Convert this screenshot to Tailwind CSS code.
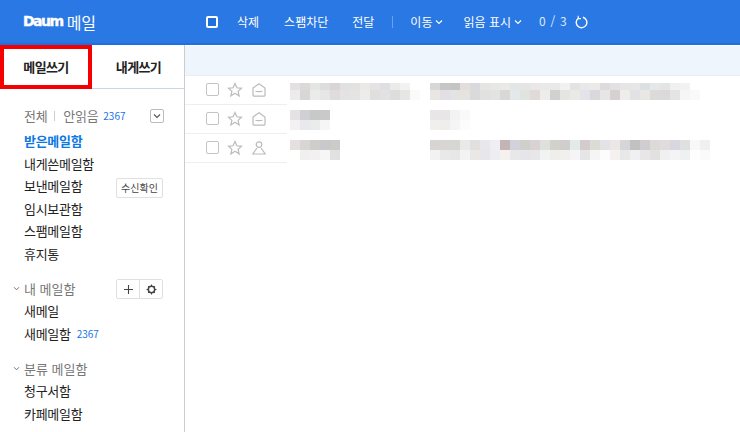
<!DOCTYPE html>
<html lang="ko">
<head>
<meta charset="UTF-8" />
<title>Daum 메일</title>
<script src="https://cdn.jsdelivr.net/npm/@tailwindcss/browser@4"></script>
</head>
<body class="w-[740px] h-[432px] overflow-hidden bg-white text-[#222] text-[13px] font-['Noto_Sans_CJK_KR','Noto_Sans',sans-serif]">

<!-- Top bar -->
<header class="h-[45px] bg-[#2a78e4] border-b-2 border-[#1f6fdc] flex items-center text-white">
  <div class="w-[185px] pl-[23px] flex items-center gap-[4px]">
    <span class="font-['DejaVu_Sans'] font-bold text-[14px] tracking-[-1.5px] [-webkit-text-stroke:0.4px_white]">Daum</span>
    <span class="text-[16px] leading-none">메일</span>
  </div>
  <div class="flex items-center text-[12px] ml-[21px]">
    <span class="w-[12px] h-[12px] border-2 border-white rounded-[2px] bg-[#1f6fdc]"></span>
    <span class="ml-[19px]">삭제</span>
    <span class="ml-[25px]">스팸차단</span>
    <span class="ml-[24px]">전달</span>
    <span class="ml-[18px] w-px h-[12px] bg-white/30"></span>
    <span class="ml-[17px]">이동</span>
    <svg class="ml-[3px]" width="8" height="6" viewBox="0 0 8 6" fill="none" stroke="white" stroke-width="1.1"><path d="M1 1.500l3 3 3-3"/></svg>
    <span class="ml-[20px]">읽음 표시</span>
    <svg class="ml-[3px]" width="8" height="6" viewBox="0 0 8 6" fill="none" stroke="white" stroke-width="1.1"><path d="M1 1.500l3 3 3-3"/></svg>
    <span class="ml-[17px] text-[#dbe9fc] tracking-[0.7px] -translate-y-px">0 / 3</span>
    <svg class="ml-[8px]" width="13" height="14" viewBox="0 0 13 14" fill="none" stroke="white" stroke-width="1.4"><path d="M3.600 3a5.300 5.300 0 1 0 4.300-.7"/><path d="M3.200 0.800v2.800h2.800" stroke-width="1.100"/></svg>
  </div>
</header>

<div class="flex h-[387px]">
  <!-- Sidebar -->
  <aside class="w-[185px] shrink-0 border-r border-[#ccc]">
    <div class="relative h-[44px] flex border-b border-[#c9d5e5] text-[13px] font-bold tracking-[-0.6px]">
      <div class="w-[92px] flex items-center justify-center">메일쓰기</div>
      <div class="flex-1 pl-[1px] flex items-center justify-center">내게쓰기</div>
      <div class="absolute left-0 top-0 w-[92px] h-[44px] border-4 border-[#f50000]"></div>
    </div>

    <div class="pl-[24px] pr-[21px] pt-[15px] tracking-[-0.3px]">
      <div class="flex items-center h-[23px] mb-[3px] text-[#777]">
        <span>전체</span>
        <span class="ml-[7px] mr-[8px] w-px h-[10px] bg-[#ccc]"></span>
        <span>안읽음</span>
        <span class="ml-[5px] text-[10px] tracking-normal text-[#1a73e8]">2367</span>
        <span class="ml-auto -mr-px w-[14px] h-[14px] border border-[#bbb] rounded-[2px] flex items-center justify-center">
          <svg width="8" height="6" viewBox="0 0 8 6" fill="none" stroke="#555" stroke-width="1.1"><path d="M1 1.500l3 3 3-3"/></svg>
        </span>
      </div>
      <ul class="leading-[22.600px]">
        <li class="h-[22.600px] font-bold text-[#0b78e3]">받은메일함</li>
        <li class="h-[22.600px]">내게쓴메일함</li>
        <li class="h-[22.600px] flex items-center justify-between">보낸메일함
          <span class="mt-[3px] w-[47px] h-[20px] border border-[#e0e0e0] rounded-[2px] text-[10px] leading-[18px] tracking-normal text-center text-[#444]">수신확인</span>
        </li>
        <li class="h-[22.600px]">임시보관함</li>
        <li class="h-[22.600px]">스팸메일함</li>
        <li class="h-[22.600px]">휴지통</li>
      </ul>

      <div class="relative mt-[11.400px] flex items-center h-[23px] text-[#777]">
        <svg class="absolute left-[-11px] top-[9px]" width="7" height="5" viewBox="0 0 8 6" fill="none" stroke="#555" stroke-width="1"><path d="M1 1.500l3 3 3-3"/></svg>
        <span class="tracking-normal">내 메일함</span>
        <span class="ml-auto mt-[2px] flex w-[47px] h-[20px] border border-[#e0e0e0] rounded-[2px]">
          <span class="flex-1 flex items-center justify-center border-r border-[#e0e0e0]">
            <svg width="11" height="11" viewBox="0 0 11 11" stroke="#444" stroke-width="1.1"><path d="M5.500 1v9M1 5.500h9"/></svg>
          </span>
          <span class="flex-1 flex items-center justify-center">
            <svg width="11" height="11" viewBox="0 0 11 11" fill="none" stroke="#444" stroke-width="1.500"><circle cx="5.500" cy="5.500" r="3.200"/><path stroke-width="1" d="M5.500 0.500v1.500M5.500 9v1.500M0.500 5.500H2M9 5.500h1.500M2 2l1 1M8 8l1 1M9 2L8 3M3 8l-1 1"/></svg>
          </span>
        </span>
      </div>
      <ul class="leading-[22.600px]">
        <li class="h-[22.600px]">새메일</li>
        <li class="h-[22.600px] flex items-center">새메일함<span class="ml-[6px] text-[10px] tracking-normal text-[#1a73e8]">2367</span></li>
      </ul>

      <div class="relative mt-[11.800px] flex items-center h-[23px] text-[#777]">
        <svg class="absolute left-[-11px] top-[9px]" width="7" height="5" viewBox="0 0 8 6" fill="none" stroke="#555" stroke-width="1"><path d="M1 1.500l3 3 3-3"/></svg>
        <span class="tracking-normal">분류 메일함</span>
      </div>
      <ul class="leading-[22.600px]">
        <li class="h-[22.600px]">청구서함</li>
        <li class="h-[22.600px]">카페메일함</li>
      </ul>
    </div>
  </aside>

  <!-- Mail list -->
  <main class="flex-1">
    <div class="h-[30px] mt-px bg-[#eff5fd] border-b border-[#e8edf3]"></div>
    <div id="rows"></div>
  </main>
</div>

<script>
  const star = '<svg width="16" height="16" viewBox="0 0 16 16" fill="none" stroke="#bbb" stroke-width="1.2"><path d="M8 1.500l1.900 4.300 4.600.5-3.400 3.100 1 4.600L8 11.200l-4.100 2.800 1-4.600L1.500 6.300l4.600-.5z"/></svg>';
  const open = '<svg width="14" height="14" viewBox="0 0 14 14" fill="none" stroke="#bbb" stroke-width="1.200"><path d="M1 5L7 .8 13 5v7a1.200 1.200 0 0 1-1.200 1.200H2.200A1.200 1.200 0 0 1 1 12z"/><path d="M3.500 8.200c1 .5 6 .5 7 0"/></svg>';
  const person = '<svg width="14" height="14" viewBox="0 0 14 14" fill="none" stroke="#bbb" stroke-width="1.200"><circle cx="7" cy="3.600" r="2.800"/><path d="M5 7L.8 13h12.400L9 7"/></svg>';

  // pixelated (mosaic) sender and subject cells, two bands per row
  const rows = [
    { icon: open, offset: 7, top: 7, s: ['e3e1e1 dcdad9 e5e5e3 dedddd d9d5d5 e2e1e2 e2e2e2 ebe9e8 e4e4e6 dfdfe1 ebebe9 f2f2f2', 'ececec d9d7d6 eaebeb e7e6e6 e0dcdc e4e2e2 e4e4e4 edeceb e1dfdc e2e2e5 dddddd e7e6e4 fafaf8'],
      m: ['d8d7d7 c6c5c7 c4c4c2 e3dedb d9d9de e6e5e4 e7e7e5 e9e9e9 e3e6e6 e5e5e5 ebe7e7 e9e9e9 e9e9e9 f1f1ef e3e3e4 e9e8e8 ece9e9 dddbdb e2e1e3 e7e6e7 e7e7e9 dde0e0 e6e7ea e2e5e2 f1f0f0 f3f2f2', 'e9e6e3 e0e0e5 e3e2e4 e8e2de dbdadb e2e1e2 e1e4e0 d9d8d6 e3e8e8 e0e4df e0dbd8 ededeb d3d0d0 e5e6e4 e9e9e6 e2e4e9 d8d8dd e7e5e6 d6d0d0 efecea e2e2e5 e8e7e6 dbdbd8 dcd9db e3e5e4 f7f6f6 f9f9f8'] },
    { icon: open, offset: 5, top: 10, s: ['e4e2e2 d0cfd3 c9c8c8 c9c9c9', 'f3f1f2 e9e8ea eaecec f7f6f6'], m: ['e8e6e6 e8e6e7 f3f3f3 f9f9f9', 'efefed f0eeed f5f5f5 fcfcfc'] },
    { icon: person, offset: 6, top: 10, s: ['e3e0df d9d5d5 cfcdcc c9c9cb cdcac8', 'ffffff f2eff0 f2f0f0 f6f6f6 e2e1e1'],
      m: ['d7d5d4 d7d6d2 d5d7d3 e8eaea e2e0de e8e8ec efeff3 c3b5b3 d2d2da cfcfcb d8d2d2 dee0de d3d1cb d0cecb e4e9e9 d4cccc dcdcd4 e3e2e6 ece6e6 d5d6da c2c1c1 d1cccf dadad6 e0dcdc d8d6de dde2e0 f8f8f8 f0f0f0', 'f2f2f2 e9e9e9 e7e7e7 f3f3f3 e9e8e6 e7e6ea eeeef2 f5f1ef e8e7ea e6e6ea e7e7ea f1f2f2 eeeeeb f1f0ef f5f5f7 e6e6e6 f5f5f5 fcfcfc f5f1f1 e8e8e8 f0f0f2 e9e6e8 e3e0e1 f0f0f0 f4f3f5 eff1f0 fdfdfd fafafa'] },
  ];
  const band = (cells, h) => '<div class="flex">' + cells.split(' ').map(c => `<i class="block w-[10px]" style="height:${h}px;background:#${c}"></i>`).join('') + '</div>';
  const mosaic = (r, k) => band(r[k][0], r.top) + band(r[k][1], 10);
  document.getElementById('rows').innerHTML = rows.map(r => `
    <div class="h-[29px] w-[555px] pb-[2px] flex items-center relative">
      <div class="absolute left-0 bottom-0 w-[102px] h-px bg-[#eee]"></div>
      <span class="ml-[21px] w-[13px] h-[13px] border-[1.500px] border-[#c4c4c4] rounded-[2px]"></span>
      <span class="ml-[8px] flex">${star}</span>
      <span class="ml-[9px] flex">${r.icon}</span>
      <div class="absolute left-[105px]" style="top:${r.offset}px">${mosaic(r, 's')}</div>
      <div class="absolute left-[245px]" style="top:${r.offset}px">${mosaic(r, 'm')}</div>
    </div>`).join('');
</script>
</body>
</html>
